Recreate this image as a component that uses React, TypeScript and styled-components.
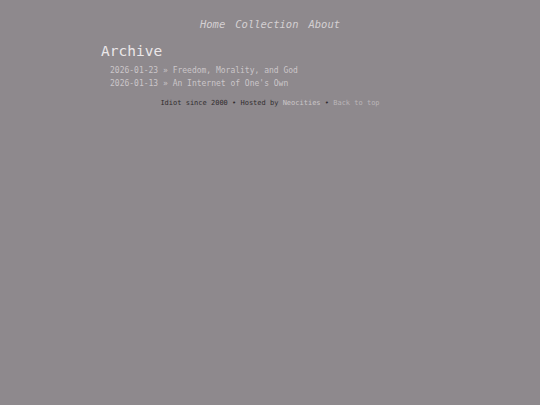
import { createGlobalStyle, styled } from "styled-components"

const GlobalStyle = createGlobalStyle`
  html, body {
    margin: 0;
    padding: 0;
    background: #8e898d;
  }
  body {
    font-family: "DejaVu Sans Mono", monospace;
    color: #d9d5d7;
  }
`

const Page = styled.div`
  width: 540px;
  min-height: 405px;
  display: flex;
  flex-direction: column;
  align-items: center;
`

const Nav = styled.nav`
  display: flex;
  gap: 10px;
  padding-top: 17px;
  font-size: 10.5px;
  font-style: italic;
  line-height: 14px;
`

const NavLink = styled.a`
  color: #d4d0d2;
  text-decoration: none;
`

const Main = styled.main`
  width: 338px;
  padding-top: 10px;
`

const Heading = styled.h1`
  margin: 0;
  font-size: 14.5px;
  font-weight: normal;
  line-height: 20px;
  color: #ebe7e9;
`

const List = styled.ul`
  list-style: none;
  margin: 3px 0 0;
  padding: 0 0 0 9px;
  font-size: 8px;
  line-height: 13px;
  color: #cbc6c9;
`

const Footer = styled.footer`
  margin-top: 8px;
  font-size: 7px;
  line-height: 10px;
  color: #322e30;
`

const FooterLink = styled.a<{ $tone: string }>`
  color: ${(p) => p.$tone};
  text-decoration: none;
`

const posts = [
  { date: "2026-01-23", title: "Freedom, Morality, and God" },
  { date: "2026-01-13", title: "An Internet of One's Own" },
]

export default function App() {
  return (
    <Page>
      <GlobalStyle />
      <Nav>
        <NavLink href="#">Home</NavLink>
        <NavLink href="#">Collection</NavLink>
        <NavLink href="#">About</NavLink>
      </Nav>
      <Main>
        <Heading>Archive</Heading>
        <List>
          {posts.map((p) => (
            <li key={p.date}>
              {p.date} » {p.title}
            </li>
          ))}
        </List>
      </Main>
      <Footer>
        Idiot since 2000 • Hosted by <FooterLink $tone="#cbc7c9" href="#">Neocities</FooterLink> • <FooterLink $tone="#bbb6b9" href="#">Back to top</FooterLink>
      </Footer>
    </Page>
  )
}
